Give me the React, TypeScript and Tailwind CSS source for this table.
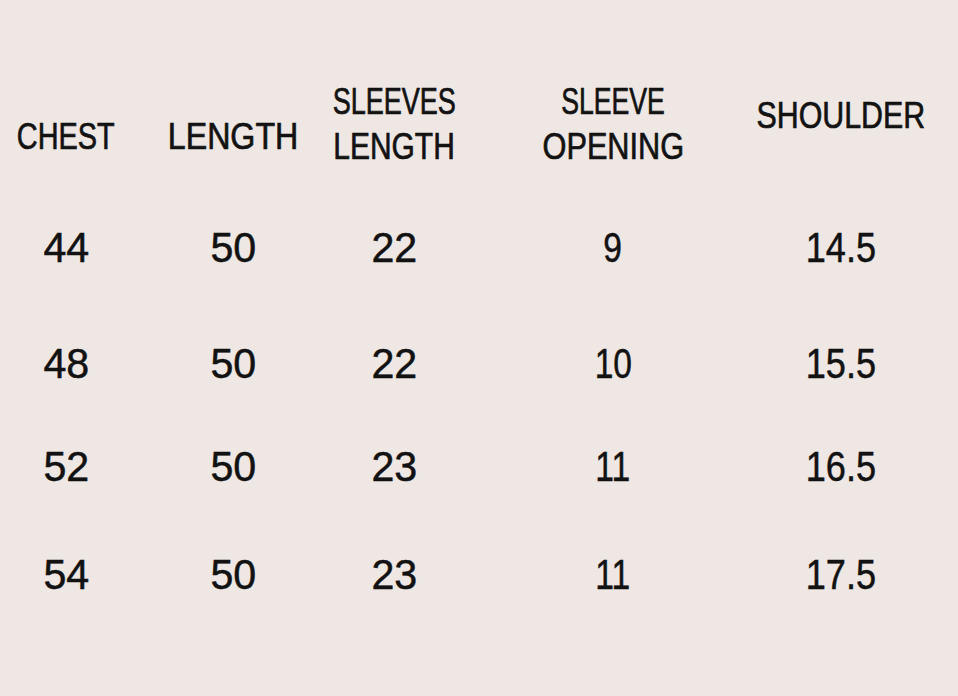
import React from 'react';

const cols = ['w-[132px]', 'w-[202px]', 'w-[120px]', 'w-[318px]', 'w-[138px]'];

// reference face is much narrower than Liberation Sans, so each word gets squeezed to its width
const rows = [
  { values: ['44', '50', '22', '9', '14.5'], gap: 'mt-0' },
  { values: ['48', '50', '22', '10', '15.5'], gap: 'mt-[74px]' },
  { values: ['52', '50', '23', '11', '16.5'], gap: 'mt-[61px]' },
  { values: ['54', '50', '23', '11', '17.5'], gap: 'mt-[66px]' },
];

const valueScale = ['scale-x-[0.98]', 'scale-x-[0.98]', 'scale-x-[0.98]', 'scale-x-[0.8]', 'scale-x-[0.86]'];

function Cell({ col, children, className = '' }: { col: number; children: React.ReactNode; className?: string }) {
  return (
    <div className={`${cols[col]} shrink-0 flex flex-col items-center whitespace-nowrap ${className}`}>
      {children}
    </div>
  );
}

function Word({ scale, children }: { scale: string; children: React.ReactNode }) {
  return <span className={`inline-block ${scale}`}>{children}</span>;
}

export default function App() {
  return (
    <div
      className="w-[958px] h-[696px] bg-[#efe7e3] text-[#121212] overflow-hidden"
      style={{ fontFamily: '"Liberation Sans", Arial, sans-serif' }}
    >
      {/* Header row */}
      <div className="flex items-start h-[227px] text-[37px] leading-[45px] [-webkit-text-stroke:0.7px_#121212]">
        <Cell col={0} className="pt-[114px]">
          <Word scale="scale-x-[0.78]">CHEST</Word>
        </Cell>
        <Cell col={1} className="pt-[114px]">
          <Word scale="scale-x-[0.87]">LENGTH</Word>
        </Cell>
        <Cell col={2} className="pt-[79px]">
          <Word scale="scale-x-[0.73]">SLEEVES</Word>
          <Word scale="scale-x-[0.81]">LENGTH</Word>
        </Cell>
        <Cell col={3} className="pt-[79px]">
          <Word scale="scale-x-[0.72]">SLEEVE</Word>
          <Word scale="scale-x-[0.83]">OPENING</Word>
        </Cell>
        <Cell col={4} className="pt-[93px]">
          <Word scale="scale-x-[0.82]">SHOULDER</Word>
        </Cell>
      </div>

      {/* Measurements */}
      {rows.map((row, i) => (
        <div
          key={i}
          className={`flex items-center h-[42px] text-[42px] leading-[42px] [-webkit-text-stroke:0.5px_#121212] ${row.gap}`}
        >
          {row.values.map((v, j) => (
            <Cell key={j} col={j}>
              <Word scale={valueScale[j]}>{v}</Word>
            </Cell>
          ))}
        </div>
      ))}
    </div>
  );
}
